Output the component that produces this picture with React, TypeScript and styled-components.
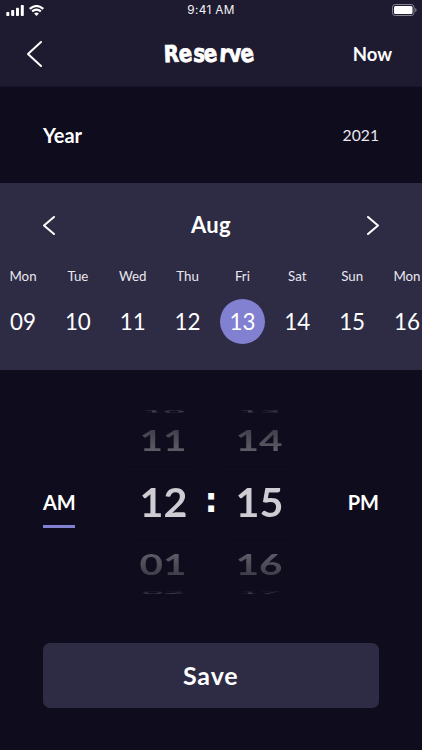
import React from "react";
import styled, { createGlobalStyle } from "styled-components";

const Global = createGlobalStyle`
  * { box-sizing: border-box; }
  html, body { margin: 0; padding: 0; background: #0f0c1d; }
  body { overflow: hidden; }
  button { border: 0; padding: 0; background: none; color: inherit; font: inherit; display: flex; align-items: center; justify-content: center; }
`;

const Screen = styled.main`
  width: 422px;
  height: 750px;
  overflow: hidden;
  display: flex;
  flex-direction: column;
  background: #0f0c1d;
  color: #fff;
  font-family: Lato, "Noto Sans", sans-serif;
`;

const Top = styled.header`
  height: 87px;
  flex: none;
  background: #1e1b30;
  border-bottom: 1px solid #18142a;
`;

const StatusBar = styled.div`
  height: 20px;
  display: grid;
  grid-template-columns: 1fr auto 1fr;
  align-items: center;
  padding: 0 5px 0 6px;
`;

const Signals = styled.div`
  display: flex;
  gap: 5px;
  align-items: center;
`;

const Clock = styled.span`
  font: 400 11.8px/20px Inter, sans-serif;
  letter-spacing: 0.35px;
  margin-left: -1px;
  color: #f1f0f5;
`;

const BatteryIcon = styled.svg`
  justify-self: end;
`;

const NavBar = styled.nav`
  height: 66px;
  display: grid;
  grid-template-columns: 1fr auto 1fr;
  align-items: center;
  padding: 2px 30px 0 27px;
`;

const Title = styled.h1`
  margin: 2px -1px 0 0;
  font: 700 22px/30px "DejaVu Sans Condensed", "DejaVu Sans", sans-serif;
  font-stretch: condensed;
  -webkit-text-stroke: 0.7px #fff;
  white-space: nowrap;
`;

const Letter = styled.span<{ $tilt: number; $grow: number }>`
  display: inline-block;
  transform: rotate(${(p) => p.$tilt}deg) scaleY(${(p) => p.$grow});
  transform-origin: 50% 78%;
  margin-right: 0.2px;
`;

const Label = styled.span<{ $size: number; $weight?: number; $track?: number; $color?: string }>`
  font-size: ${(p) => p.$size}px;
  line-height: 1.2;
  font-weight: ${(p) => p.$weight ?? 400};
  letter-spacing: ${(p) => p.$track ?? 0}px;
  color: ${(p) => p.$color ?? "#fff"};
  white-space: nowrap;
`;

const NowButton = styled.button`
  && { justify-content: flex-end; }
`;

const BackButton = styled.button`
  && { justify-content: flex-start; }
`;

const YearRow = styled.section`
  height: 96px;
  flex: none;
  display: flex;
  align-items: center;
  justify-content: space-between;
  padding: 0 43px;
`;

const Calendar = styled.section`
  height: 187px;
  flex: none;
  background: #2e2b45;
`;

const MonthRow = styled.div`
  height: 84px;
  display: flex;
  align-items: center;
  justify-content: space-between;
  padding: 0 43px;
`;

const Days = styled.div`
  width: 438.8px;
  margin: 2px 0 0 -4.4px;
  display: grid;
  grid-template-columns: repeat(8, 1fr);
`;

const Day = styled.div`
  display: flex;
  flex-direction: column;
  align-items: center;
  gap: 14px;
`;

const DateCircle = styled.div<{ $active: boolean }>`
  width: 45px;
  height: 45px;
  padding-top: 2px;
  border-radius: 50%;
  display: flex;
  align-items: center;
  justify-content: center;
  background: ${(p) => (p.$active ? "#8280d0" : "transparent")};
`;

const TimePicker = styled.section`
  height: 273px;
  flex: none;
  display: grid;
  grid-template-columns: 1fr 68px 28px 68px 1fr;
  align-items: start;
  padding: 38px 43px 0;
`;

const Period = styled.button<{ $active?: boolean; $end?: boolean }>`
  && {
    height: 38px;
    margin-top: 82px;
    align-items: flex-start;
    justify-self: ${(p) => (p.$end ? "end" : "start")};
    border-bottom: 3px solid ${(p) => (p.$active ? "#8280d0" : "transparent")};
  }
`;

const Wheel = styled.div`
  display: flex;
  flex-direction: column;
`;

const Slot = styled.div<{ $height: number; $line?: boolean }>`
  height: ${(p) => p.$height}px;
  display: flex;
  align-items: center;
  justify-content: center;
  overflow: hidden;
  padding-bottom: ${(p) => (p.$height > 10 ? 2 : 0)}px;
  border: solid #0c0919;
  border-width: ${(p) => (p.$line ? "1px 0" : "0")};
`;

const Digits = styled.span<{ $squash: number; $from: string; $to: string; $wide?: number }>`
  flex: none;
  font-size: 40.5px;
  line-height: 48px;
  font-weight: 700;
  transform: scale(${(p) => p.$wide ?? 1}, ${(p) => p.$squash});
  color: transparent;
  background: linear-gradient(${(p) => p.$from} 20%, ${(p) => p.$to} 82%);
  background-clip: text;
  -webkit-background-clip: text;
`;

const Colon = styled.span`
  margin-top: 73px;
  text-align: center;
  font: 700 33px/40px "DejaVu Sans", sans-serif;
`;

const Footer = styled.footer`
  padding: 0 43.5px 0 43px;
`;

const SaveButton = styled.button`
  && {
    width: 100%;
    height: 65px;
    padding-bottom: 1px;
    border-radius: 7px;
    background: #2e2b45;
  }
`;

const Chevron = ({ w, h, right = false }: { w: number; h: number; right?: boolean }) => (
  <svg width={w} height={h} viewBox={`0 0 ${w} ${h}`} fill="none" stroke="#fff" strokeWidth="2" strokeLinecap="round" strokeLinejoin="round">
    <path d={right ? `M1 1L${w - 1} ${h / 2}L1 ${h - 1}` : `M${w - 1} 1L1 ${h / 2}L${w - 1} ${h - 1}`} />
  </svg>
);

const days = [
  ["Mon", "09"], ["Tue", "10"], ["Wed", "11"], ["Thu", "12"],
  ["Fri", "13"], ["Sat", "14"], ["Sun", "15"], ["Mon", "16"],
];

const titleLetters: [string, number, number][] = [
  ["R", -2, 1.06], ["e", -8, 1.1], ["s", 3, 1.12], ["e", -8, 1.1], ["r", 4, 1.1], ["v", -4, 1.08], ["e", -10, 1.12],
];

const NumberWheel = ({ values }: { values: string[] }) => (
  <Wheel>
    <Slot $height={7}><Digits $squash={0.07} $from="#44424e" $to="#24212e" $wide={0.9}>{values[0]}</Digits></Slot>
    <Slot $height={51}><Digits $squash={0.7} $from="#403e4a" $to="#5e5c67">{values[1]}</Digits></Slot>
    <Slot $height={74} $line><Digits $squash={1} $from="#cfcdd3" $to="#cfcdd3" $wide={1.02}>{values[2]}</Digits></Slot>
    <Slot $height={49}><Digits $squash={0.7} $from="#5e5c67" $to="#403e4a">{values[3]}</Digits></Slot>
    <Slot $height={7}><Digits $squash={0.07} $from="#24212e" $to="#44424e" $wide={0.9}>{values[4]}</Digits></Slot>
  </Wheel>
);

export default function App() {
  return (
    <Screen>
      <Global />
      <Top>
        <StatusBar>
          <Signals>
            <svg width="18" height="12" viewBox="0 0 18 12" fill="#fff">
              <rect x="0.3" y="8" width="3" height="4" rx="0.8" />
              <rect x="5.2" y="6" width="3" height="6" rx="0.8" />
              <rect x="10" y="3.7" width="3" height="8.3" rx="0.8" />
              <rect x="14.8" y="1" width="3" height="11" rx="0.8" />
            </svg>
            <svg width="15" height="11" viewBox="0 0 15 11" fill="none" stroke="#fff" strokeWidth="2.1">
              <path d="M0.7 3.9Q7.5 -1.9 14.3 3.9" />
              <path d="M3.1 6.4Q7.5 2.8 11.9 6.4" />
              <path d="M5.1 8.4Q7.5 6.5 9.9 8.4L7.5 10.9Z" fill="#fff" stroke="none" />
            </svg>
          </Signals>
          <Clock>9:41 AM</Clock>
          <BatteryIcon width="25" height="12" viewBox="0 0 25 12">
            <rect x="0.5" y="0.5" width="21.5" height="11" rx="2.8" fill="none" stroke="#85838f" />
            <rect x="2" y="2" width="18.5" height="8" rx="1.5" fill="#fff" />
            <path d="M23.2 4.1Q24.6 4.6 24.6 6T23.2 7.9Z" fill="#85838f" />
          </BatteryIcon>
        </StatusBar>
        <NavBar>
          <BackButton aria-label="Back"><Chevron w={15} h={26} /></BackButton>
          <Title>
            {titleLetters.map(([letter, tilt, grow], i) => (
              <Letter key={i} $tilt={tilt} $grow={grow}>{letter}</Letter>
            ))}
          </Title>
          <NowButton><Label $size={18.5} $weight={700}>Now</Label></NowButton>
        </NavBar>
      </Top>
      <YearRow>
        <Label $size={20} $weight={700}>Year</Label>
        <Label $size={15.7} $color="#e9e8ef">2021</Label>
      </YearRow>
      <Calendar>
        <MonthRow>
          <button aria-label="Previous month"><Chevron w={12} h={19} /></button>
          <Label $size={22} $weight={700} $track={0.4}>Aug</Label>
          <button aria-label="Next month"><Chevron w={12} h={19} right /></button>
        </MonthRow>
        <Days>
          {days.map(([name, date]) => (
            <Day key={date}>
              <Label $size={13.3} $color="#e9e8ef">{name}</Label>
              <DateCircle $active={date === "13"}><Label $size={22.4}>{date}</Label></DateCircle>
            </Day>
          ))}
        </Days>
      </Calendar>
      <TimePicker>
        <Period $active><Label $size={20} $weight={700} $track={-0.2}>AM</Label></Period>
        <NumberWheel values={["10", "11", "12", "01", "02"]} />
        <Colon>:</Colon>
        <NumberWheel values={["13", "14", "15", "16", "17"]} />
        <Period $end><Label $size={20} $weight={700}>PM</Label></Period>
      </TimePicker>
      <Footer>
        <SaveButton><Label $size={25} $weight={700} $track={0.9}>Save</Label></SaveButton>
      </Footer>
    </Screen>
  );
}
